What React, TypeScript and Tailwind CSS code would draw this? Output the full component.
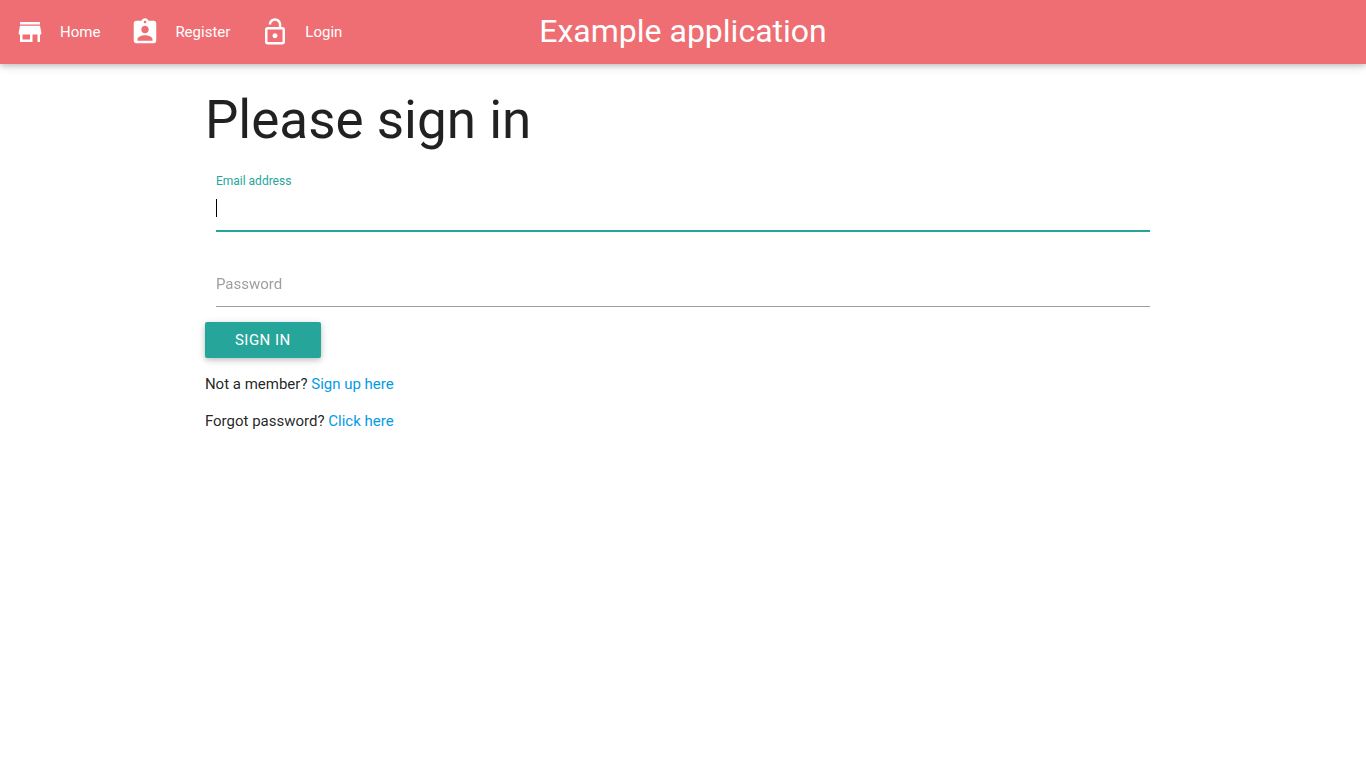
import { MdAssignmentInd, MdLockOpen, MdStore } from "react-icons/md";

const navItems = [
  { label: "Home", icon: MdStore },
  { label: "Register", icon: MdAssignmentInd },
  { label: "Login", icon: MdLockOpen },
];

function NavBar() {
  return (
    <nav className="grid h-16 grid-cols-[1fr_auto_1fr] items-start bg-[#ee6e73] text-white shadow-[0_2px_5px_0_rgba(0,0,0,0.16),0_2px_10px_0_rgba(0,0,0,0.12)]">
      <ul className="flex">
        {navItems.map(({ label, icon: Icon }) => (
          <li key={label}>
            <a href="#" className="flex h-16 items-center gap-[15px] px-[15px]">
              <Icon size={30} aria-hidden="true" />
              {label}
            </a>
          </li>
        ))}
      </ul>
      <a href="#" className="text-[32px] leading-[62px]">
        Example application
      </a>
    </nav>
  );
}

export default function App() {
  return (
    <div className="font-[Roboto,sans-serif] text-[15px] leading-[22px] text-black/87">
      <NavBar />
      <main className="mx-auto w-[70%] max-w-7xl">
        <h1 className="pt-[26px] text-[53px] leading-[60px]">Please sign in</h1>
        <form className="mt-6 px-[11px]" id="signin">
          <div className="relative flex flex-col">
            <label htmlFor="email" className="text-xs leading-[14px] text-[#26a69a]">
              Email address
            </label>
            <input
              id="email"
              type="email"
              autoFocus
              placeholder=" "
              className="peer h-11 border-b-2 border-[#26a69a] bg-transparent outline-none placeholder-shown:caret-transparent"
            />
            <span
              aria-hidden="true"
              className="absolute bottom-[15px] left-0 hidden h-[18px] w-px bg-black peer-placeholder-shown:block"
            />
          </div>
          <div className="relative mt-[30px] flex flex-col">
            <input
              id="password"
              type="password"
              placeholder=" "
              className="peer h-[45px] border-b border-[#9e9e9e] bg-transparent outline-none"
            />
            <label
              htmlFor="password"
              className="absolute top-[11px] left-0 hidden cursor-text text-[#9e9e9e] peer-placeholder-shown:block"
            >
              Password
            </label>
          </div>
        </form>
        <button
          type="submit"
          form="signin"
          className="mt-[15px] block h-9 rounded-xs bg-[#26a69a] px-[30px] tracking-[0.5px] text-white shadow-[0_2px_5px_0_rgba(0,0,0,0.16),0_2px_10px_0_rgba(0,0,0,0.12)]"
        >
          SIGN IN
        </button>
        <p className="mt-[15px]">
          Not a member?{" "}
          <a href="#" className="text-[#039be5]">
            Sign up here
          </a>
        </p>
        <p className="mt-[15px]">
          Forgot password?{" "}
          <a href="#" className="text-[#039be5]">
            Click here
          </a>
        </p>
      </main>
    </div>
  );
}
